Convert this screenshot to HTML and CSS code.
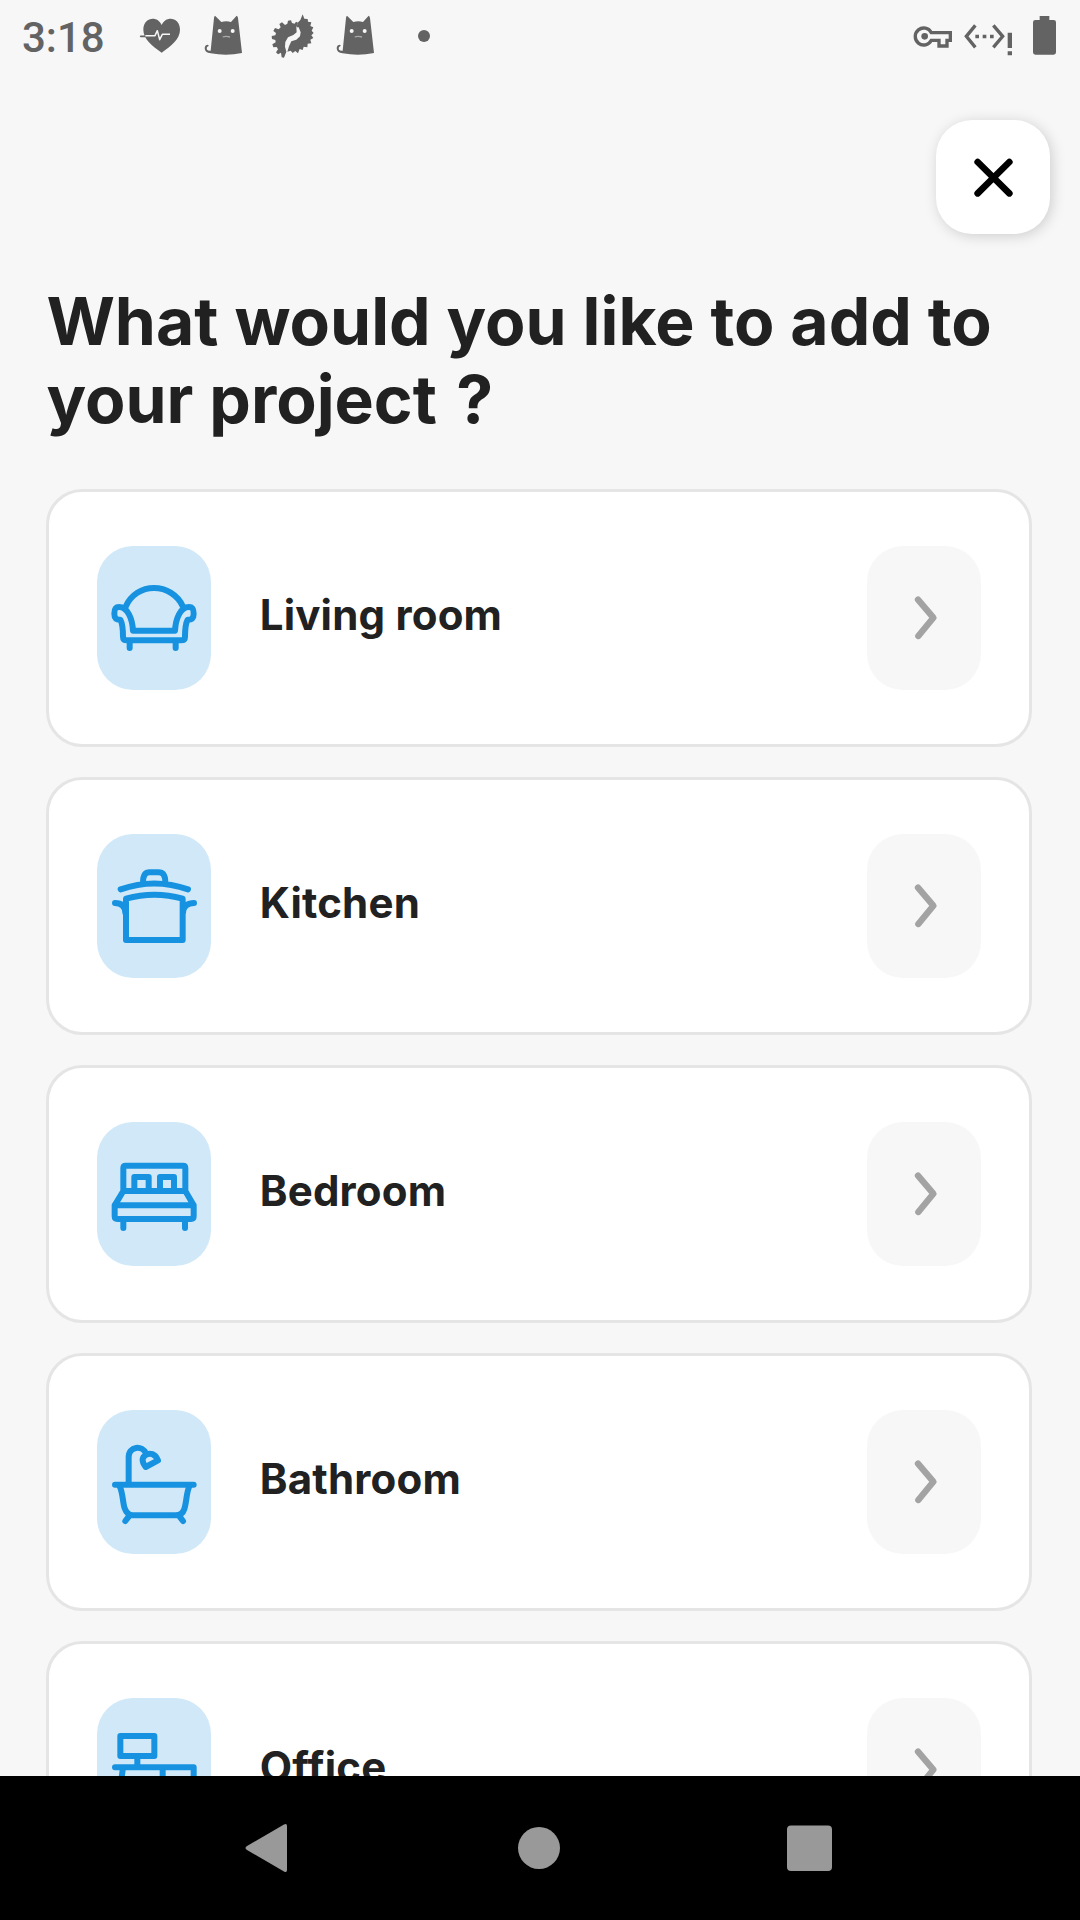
FILE: index.html
```html
<!DOCTYPE html>
<html lang="en">
<head>
<meta charset="utf-8">
<title>Add to your project</title>
<link rel="stylesheet" href="styles.css">
</head>
<body>
<svg class="defs" aria-hidden="true">
  <symbol id="cat" viewBox="-21 0 198 216">
    <path fill="currentColor" d="M45 47 64 66Q79 62 93 66L110 47Q113 48 114 54L126 159Q80 169 32 160Q14 158 14 144Q15 134 24 134Q28 137 25 139Q18 142 21 149Q25 153 32 152L42 54Q42 49 45 47Z"/>
    <circle cx="59" cy="93" r="6" fill="#f7f7f7"/><circle cx="98" cy="93" r="6" fill="#f7f7f7"/>
    <path d="M68 111Q78 107 90 111" fill="none" stroke="#aaa" stroke-width="4"/>
  </symbol>
  <symbol id="chevron" viewBox="0 0 342 432">
    <path d="M153 161 199 215 154 270" fill="none" stroke="#a3a3a3" stroke-width="19" stroke-linecap="round" stroke-linejoin="round"/>
  </symbol>
</svg>

<header class="status">
  <span class="time">3:18</span>
  <div class="notifications">
    <svg viewBox="381 0 198 216">
      <path fill="currentColor" d="M485 158C455 137 430 116 430 89C430 52 472 45 485 75C498 45 540 52 540 89C540 116 515 137 485 158Z"/>
      <path d="M422 109H436" stroke="currentColor" stroke-width="5" stroke-linecap="round"/>
      <path d="M436 107H465L472 92 479 119 487 103H510" fill="none" stroke="#f7f7f7" stroke-width="4.500" stroke-linejoin="round"/>
    </svg>
    <svg><use href="#cat"/></svg>
    <svg viewBox="177 0 198 216">
      <path fill="currentColor" d="M294 68 288 65 284 71 276 69 273 61 264 62 262 71 255 75 246 67 238 72 242 82 236 88 225 84 220 93 228 99 226 106 215 108 216 117 226 120 227 127 217 133 220 142 230 141 234 148 228 157 234 163 243 158 245 172 252 173 259 155 255 140 256 126 264 112 280 105 290 97 289 82Z"/>
      <path fill="currentColor" d="M308 43 313 56 323 57 324 65 334 67 331 78 340 82 335 92 341 99 334 106 340 114 331 119 334 130 323 131 322 142 311 140 308 150 299 147 294 160 286 153 278 159 272 152 262 155 267 139 274 124 289 119 300 109 302 97 296 82 290 82 293 68 301 60Z"/>
    </svg>
    <svg><use href="#cat"/></svg>
    <svg viewBox="0 0 198 216"><circle cx="99" cy="108" r="18" fill="currentColor"/></svg>
  </div>
  <div class="system">
    <svg class="key" viewBox="60 0 135 216">
      <path d="M124 98H181V121H171V138H147V121H124A25.500 25.500 0 1 1 124 98Z" fill="none" stroke="currentColor" stroke-width="10"/>
      <circle cx="104" cy="109" r="10" fill="currentColor"/>
    </svg>
    <svg class="network" viewBox="210 0 165 216">
      <path d="M256 76 229 109 256 142M310 76 338 109 310 142" fill="none" stroke="currentColor" stroke-width="10"/>
      <path d="M256 104h11v11h-11zM278 104h11v11h-11zM300 104h11v11h-11zM353 98h13v46h-13zM353 154h13v12h-13z" fill="currentColor"/>
    </svg>
    <svg class="battery" viewBox="420 0 90 216">
      <path fill="currentColor" d="M449 48H478V60H491Q498 60 498 67V157Q498 164 491 164H436Q429 164 429 157V67Q429 60 436 60H449Z"/>
    </svg>
  </div>
</header>

<main class="screen">
  <div class="toolbar">
    <button class="close" aria-label="Close">
      <svg viewBox="0 0 342 342"><path d="M125 126 220 220M220 126 125 220" fill="none" stroke="#000" stroke-width="20" stroke-linecap="round"/></svg>
    </button>
  </div>
  <h1 class="title">What would you like to add to your project <span class="mark">?</span></h1>
  <div class="rooms">
    <div class="card">
      <svg class="tile room" viewBox="0 0 342 432">
        <path d="M86 182C102 146 135 126 171 126S242 146 258 182"/>
        <path d="M108 254C106 218 92 183 66 183C54 183 52 190 52 203C52 216 58 221 70 221C78 236 78 250 78 272Q78 283 90 283H252Q264 283 264 272C264 250 264 236 272 221C284 221 290 216 290 203C290 190 288 183 276 183C250 183 236 218 234 254Z"/>
        <path d="M98 285V306M236 285V306"/>
      </svg>
      <span class="label">Living room</span>
      <svg class="tile next"><use href="#chevron"/></svg>
    </div>
    <div class="card">
      <svg class="tile room" viewBox="0 0 342 432">
        <path d="M71 166Q172 131 273 166M138 146C138 122 146 115 158 115H184C197 115 205 122 205 146"/>
        <path d="M87 194Q172 170 257 194V318H87ZM54 207C70 207 84 214 85 236M291 207C274 207 259 214 258 236"/>
      </svg>
      <span class="label">Kitchen</span>
      <svg class="tile next"><use href="#chevron"/></svg>
    </div>
    <div class="card">
      <svg class="tile room" viewBox="0 0 342 432">
        <path d="M79 205V138Q79 131 86 131H258Q265 131 265 138V205M79 207H265L290 250V283Q290 291 282 291H61Q53 291 53 283V250ZM53 250H290"/>
        <path d="M112 205V165H155V205M189 205V165H231V205M79 293V318M264 293V318"/>
      </svg>
      <span class="label">Bedroom</span>
      <svg class="tile next"><use href="#chevron"/></svg>
    </div>
    <div class="card">
      <svg class="tile room" viewBox="0 0 342 432">
        <path d="M54 224H290M95 222V142C95 108 136 104 148 132M146 171 183 151C174 130 159 128 148 134C135 141 132 152 146 171Z"/>
        <path d="M68 229C78 250 77 278 83 295Q90 316 108 316H236Q256 316 262 297C269 275 268 248 277 229M95 320 85 333M248 320 258 333"/>
      </svg>
      <span class="label">Bathroom</span>
      <svg class="tile next"><use href="#chevron"/></svg>
    </div>
    <div class="card">
      <svg class="tile room" viewBox="0 0 342 432">
        <path d="M70 114H172V174H70ZM121 174V208M54 208H290V300M78 208 66 300M197 208V300M197 255H290"/>
      </svg>
      <span class="label">Office</span>
      <svg class="tile next"><use href="#chevron"/></svg>
    </div>
  </div>
</main>

<nav class="navbar">
  <svg viewBox="0 0 60 60"><path d="M7 28 44 6.500Q47 5 47 8V52Q47 55 44 53.500L7 32Q4 30 7 28Z"/></svg>
  <svg viewBox="0 0 60 60"><circle cx="29" cy="30" r="21"/></svg>
  <svg viewBox="0 0 60 60"><rect x="7" y="7.500" width="45" height="45.500" rx="4"/></svg>
</nav>
</body>
</html>
```
FILE: styles.css
```css
* { box-sizing: border-box; }

body {
  margin: 0;
  height: 1920px;
  display: flex;
  flex-direction: column;
  overflow: hidden;
  background: #f7f7f7;
  color: #212121;
  font-family: Inter, "Liberation Sans", sans-serif;
}

svg { display: block; flex: none; }

.defs { display: none; }

.status {
  flex: none;
  height: 72px;
  display: flex;
  align-items: center;
  padding: 0 20px 0 22px;
  color: #636363;
}

.time {
  width: 105px;
  padding-top: 3px;
  font: 500 42px/50px Roboto, sans-serif;
}

.notifications,
.system { display: flex; }

.notifications svg {
  width: 66px;
  height: 72px;
}

.system {
  margin-left: auto;
}

.system svg { height: 72px; }
.key { width: 45px; margin-right: 5px; }
.network { width: 55px; margin-right: 15px; }
.battery { width: 30px; }

.screen {
  flex: 1;
  min-height: 0;
  overflow: hidden;
  padding: 48px 48px 0 46.400px;
}

.toolbar {
  display: flex;
  justify-content: flex-end;
  margin-right: -18px;
}

.close {
  width: 114px;
  height: 114px;
  padding: 0;
  border: 0;
  border-radius: 36px;
  background: #fff;
  box-shadow: 2px 2px 14px rgba(0, 0, 0, 0.17);
}

.title {
  margin: 48px 0 0;
  font-size: 66px;
  line-height: 78px;
  font-weight: 700;
  word-spacing: 0.3px;
}

.mark { margin-left: 3.500px; }

.rooms {
  display: flex;
  flex-direction: column;
  gap: 30px;
  margin-top: 51px;
}

.card {
  flex: none;
  height: 258px;
  display: flex;
  align-items: center;
  padding: 0 48px;
  border: 3px solid #e5e5e5;
  border-radius: 36px;
  background: #fff;
}

.tile {
  width: 114px;
  height: 144px;
  border-radius: 36px;
}

.room {
  background: #d0e8f8;
  fill: none;
  stroke: #1792e1;
  stroke-width: 18;
  stroke-linecap: round;
  stroke-linejoin: round;
}

.next { background: #f7f7f7; }

.label {
  flex: 1;
  padding: 0 0 6px 48.300px;
  font-size: 42px;
  line-height: 52px;
  font-weight: 700;
  letter-spacing: 0.2px;
}

.navbar {
  flex: none;
  height: 144px;
  display: grid;
  grid-template-columns: repeat(3, 270px);
  justify-content: center;
  align-items: center;
  justify-items: center;
  background: #000;
  fill: #999;
}

.navbar svg {
  width: 60px;
  height: 60px;
}
```
